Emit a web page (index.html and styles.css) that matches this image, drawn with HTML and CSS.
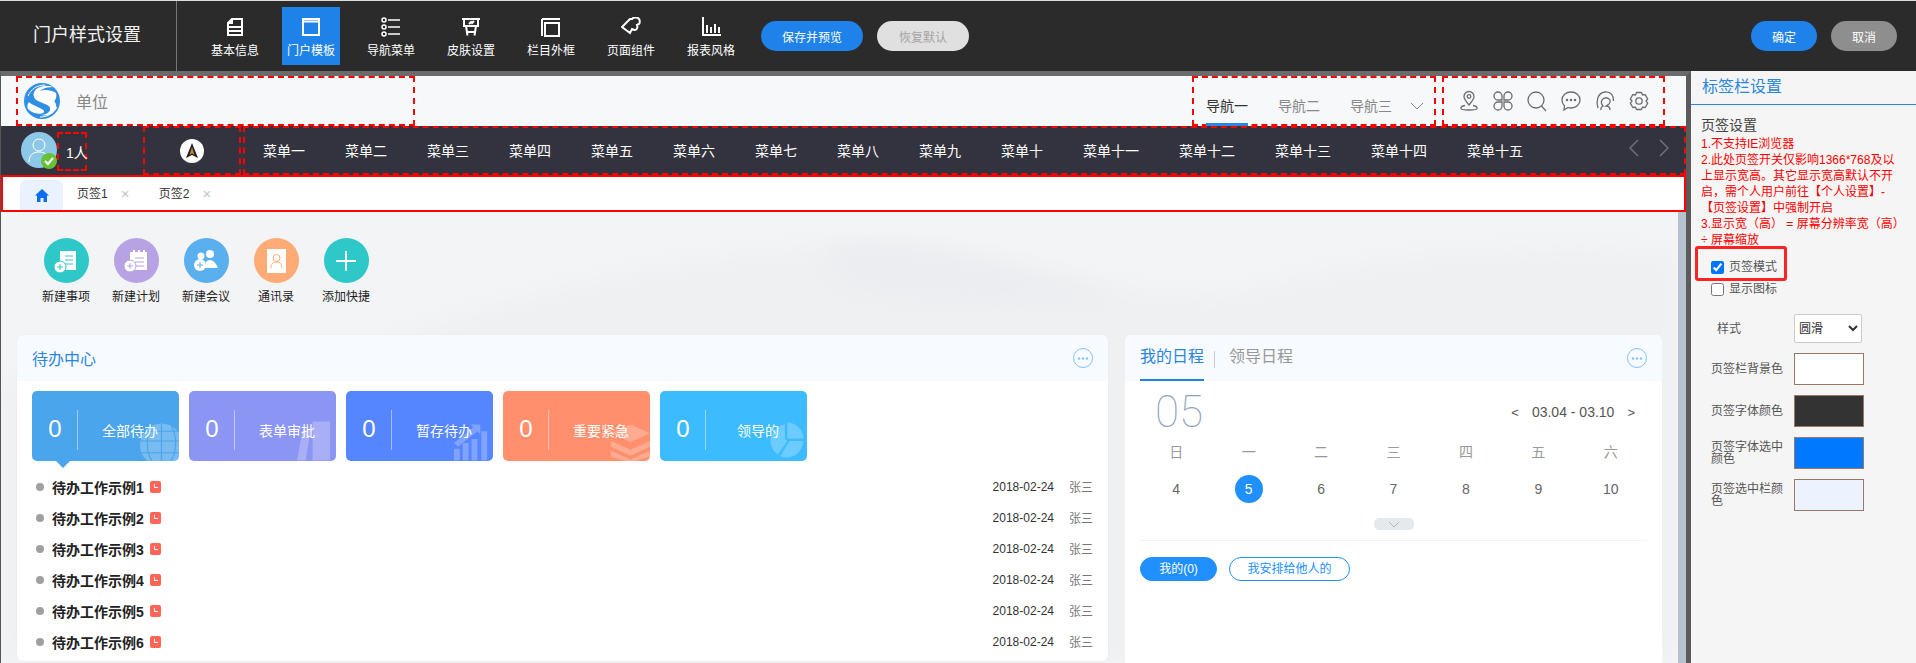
FILE: index.html
```html
<!DOCTYPE html>
<html lang="zh-CN">
<head>
<meta charset="utf-8">
<title>门户样式设置</title>
<link rel="stylesheet" href="styles.css">
</head>
<body>
<div class="app">
  <header class="toolbar">
    <div class="brand">门户样式设置</div>
    <nav class="tools">
      <a class="tool tool-first">
        <svg viewBox="0 0 20 20" class="ti"><path d="M7 2h10v16H3V6z M7 2v4H3 M3 10h14 M3 14h14" /></svg>基本信息</a>
      <a class="tool on">
        <svg viewBox="0 0 20 20" class="ti"><path d="M2 2h16v16H2z M2 4.500h16" /></svg>门户模板</a>
      <a class="tool">
        <svg viewBox="0 0 20 20" class="ti ti-thin"><circle cx="3" cy="3" r="2"/><circle cx="3" cy="10" r="2"/><circle cx="3" cy="17" r="2"/><path d="M7 3h12 M7 10h12 M7 17h12"/></svg>导航菜单</a>
      <a class="tool">
        <svg viewBox="0 0 20 20" class="ti"><path d="M1 2h18 M3 2v7h14V2 M5 9l1.500 9.500 M15 9l-1.500 9.500 M6.500 15h7 M8 7l2-2 1 1 2-2"/></svg>皮肤设置</a>
      <a class="tool">
        <svg viewBox="0 0 20 20" class="ti"><path d="M1 2h18 M1 2v17 M4 6h14v13H4z"/></svg>栏目外框</a>
      <a class="tool">
        <svg viewBox="0 0 20 20" class="ti"><path d="M1 10l8-8h2c1-2 6-2 7 0 1 1 1 4 0 5l-2 1c1 2 0 5-2 5-1 0-2-.5-3-1l-2 4z"/></svg>页面组件</a>
      <a class="tool">
        <svg viewBox="0 0 20 20" class="ti"><path d="M2 0v18h18 M6 8v8 M10 10v6 M14 7v9 M18 10v6"/></svg>报表风格</a>
    </nav>
    <button class="pill pill-save">保存并预览</button>
    <button class="pill pill-reset">恢复默认</button>
    <button class="pill pill-ok">确定</button>
    <button class="pill pill-cancel">取消</button>
  </header>

  <div class="workspace">
    <section class="preview">
      <div class="topnav">
        <div class="dash logo-box">
          <svg class="logo" viewBox="0 0 38 38">
            <circle cx="19" cy="19" r="18" fill="#2f8fe4"/>
            <path d="M30 5C20 1 8 7 11 15c2 6 15 6 16 11 1 4-4 7-9 7 8 2 17-3 15-11-2-6-15-7-16-11-1-3 5-6 13-6z" fill="#fff"/>
            <path d="M33 11C25 6 14 8 16 12c2 3 11 5 15 8 2-3 3-6 2-9zM5 27c6 6 17 6 16 2-1-3-11-5-15-9-2 3-2 5-1 7z" fill="#fff"/>
            <path d="M5 14C8 7 14 3 22 3M34 25c-3 6-9 10-17 10" fill="none" stroke="#fff"/>
          </svg>
          <span class="unit">单位</span>
        </div>
        <div class="dash nav-box">
          <a class="nav-item active">导航一</a>
          <a class="nav-item">导航二</a>
          <a class="nav-item">导航三</a>
          <svg class="nav-more" viewBox="0 0 14 8"><path d="M1 1l6 6 6-6"/></svg>
        </div>
        <div class="dash icon-box">
          <svg viewBox="0 0 22 22" class="oi"><path d="M11 15c-3-3.500-5-6-5-8.500a5 5 0 0 1 10 0c0 2.500-2 5-5 8.500z"/><circle cx="11" cy="6.500" r="1.800"/><path d="M7 15.500c-3 .5-4.500 1.500-4 3 0 1 1.500 1.500 8 1.500s8-.5 8-1.500c.5-1.500-1-2.500-4-3"/></svg>
          <svg viewBox="0 0 22 22" class="oi"><path d="M10 10H6a4 4 0 1 1 4-4z M12 10V6a4 4 0 1 1 4 4z M10 12v4a4 4 0 1 1-4-4z M12 12h4a4 4 0 1 1-4 4z"/></svg>
          <svg viewBox="0 0 22 22" class="oi"><circle cx="10" cy="10" r="8"/><path d="M15.500 16l4.500 5"/></svg>
          <svg viewBox="0 0 22 22" class="oi"><path d="M11 2c5 0 9 3.500 9 8s-4 8-9 8c-1 0-2 0-3-.5L4 20l.5-4C3 14.500 2 12.500 2 10c0-4.500 4-8 9-8z"/><circle cx="7" cy="10" r=".6"/><circle cx="11" cy="10" r=".6"/><circle cx="15" cy="10" r=".6"/></svg>
          <svg viewBox="0 0 22 22" class="oi"><path d="M4 18C2 12 3 3 11 2c6-.5 9 4 8.500 9 M7 20c-.5-2 0-3 2-4-2-2-2-4-1-6 2-3 6-3 8 0 .5 1.500 0 3-1 4l-3 2c2 0 4 1 4 4"/></svg>
          <svg viewBox="0 0 22 22" class="oi oi-round"><path d="M8.500 2.500h5l1 2.500 2.700-.4 2.500 4.400-1.700 2 1.700 2.200-2.500 4.300-2.700-.4-1 2.400h-5l-1-2.400-2.700.4-2.500-4.300 1.700-2.200-1.700-2 2.500-4.400 2.700.4z"/><circle cx="11" cy="11" r="3.200"/></svg>
        </div>
      </div>

      <div class="menubar">
        <div class="user">
          <div class="avatar">
            <svg viewBox="0 0 36 36" class="avatar-face"><circle cx="18" cy="13" r="6"/><path d="M8 30c0-7 4-10 10-10s10 3 10 10"/></svg>
            <svg viewBox="0 0 16 16" class="avatar-ok"><circle cx="8" cy="8" r="8" fill="#67c23a"/><path d="M4 8l3 3 5-6" fill="none" stroke="#fff" stroke-width="2"/></svg>
          </div>
          <div class="dash count">1人</div>
        </div>
        <div class="dash compass-box">
          <svg class="compass" viewBox="0 0 24 24"><circle cx="12" cy="12" r="12" fill="#fff"/><path d="M12 4l6 15-6-3-6 3z" fill="#1d2027"/><path d="M12 8l2.500 8-2.500-1.500-2.500 1.500z" fill="#b9872f"/></svg>
        </div>
        <div class="dash menu-box">
          <a class="menu-item">菜单一</a><a class="menu-item">菜单二</a><a class="menu-item">菜单三</a><a class="menu-item">菜单四</a><a class="menu-item">菜单五</a><a class="menu-item">菜单六</a><a class="menu-item">菜单七</a><a class="menu-item">菜单八</a><a class="menu-item">菜单九</a><a class="menu-item">菜单十</a><a class="menu-item">菜单十一</a><a class="menu-item">菜单十二</a><a class="menu-item">菜单十三</a><a class="menu-item">菜单十四</a><a class="menu-item">菜单十五</a>
          <span class="menu-arrows">
            <svg viewBox="0 0 10 18"><path d="M9 1L1 9l8 8"/></svg>
            <svg viewBox="0 0 10 18"><path d="M1 1l8 8-8 8"/></svg>
          </span>
        </div>
      </div>

      <div class="tabbar">
        <a class="tab-home"><svg viewBox="0 0 14 13"><path d="M7 0L0 6.500h2V13h3.500V9h3v4H12V6.500h2z"/></svg></a>
        <a class="tab">页签1<i class="tab-x">×</i></a>
        <a class="tab">页签2<i class="tab-x">×</i></a>
      </div>

      <div class="stage">
        <div class="canvas">
          <svg class="scenery" viewBox="0 0 1678 452" preserveAspectRatio="none">
            <defs><filter id="soft"><feGaussianBlur stdDeviation="12"/></filter></defs>
            <path d="M380 130C560 70 700 40 880 30c140 20 220 50 340 55 120-30 230-60 458-45V452H0V170c130 0 260-10 380-40z" fill="#eef0f2" filter="url(#soft)"/>
            <path d="M860 30c90 5 170 30 260 55-90 12-170 8-240-2-60-12-80-45-20-53z" fill="#ebedf0" filter="url(#soft)"/>
          </svg>
          <div class="shortcuts">
            <a class="shortcut"><span class="disc teal"><svg viewBox="0 0 28 28"><path d="M8 4h16v19H8z" fill="#fff"/><path d="M13 9h8M13 13h8M13 17h8" stroke="#2ec8c9"/><circle cx="8" cy="20" r="6" fill="#fff" stroke="#2ec8c9"/><path d="M5 20h6M8 17v6" stroke="#2ec8c9"/></svg></span>新建事项</a>
            <a class="shortcut"><span class="disc violet"><svg viewBox="0 0 28 28"><path d="M8 5h17v18H8z" fill="#fff"/><path d="M12 3v4M17 3v4M22 3v4" stroke="#fff" stroke-width="2"/><path d="M13 11h9M13 15h9M13 19h9" stroke="#b7a2e3"/><circle cx="8" cy="19" r="6" fill="#fff" stroke="#b7a2e3"/><path d="M5 19h6M8 16v6" stroke="#b7a2e3"/></svg></span>新建计划</a>
            <a class="shortcut"><span class="disc sky"><svg viewBox="0 0 28 28"><circle cx="9" cy="9" r="3.500" fill="#fff"/><circle cx="18" cy="7" r="4" fill="#fff"/><path d="M13 21c0-5 1-8 5-8s6 4 8 8z" fill="#fff"/><circle cx="8" cy="18" r="6" fill="#fff"/><path d="M5 18h6M8 15v6" stroke="#5aafee"/></svg></span>新建会议</a>
            <a class="shortcut"><span class="disc peach"><svg viewBox="0 0 28 28"><path d="M5 2h19v24H5z" fill="#fff"/><circle cx="14.500" cy="11" r="3.500" fill="none" stroke="#ffab76"/><path d="M9 21c0-4 2-6 5.500-6s5.500 2 5.500 6" fill="none" stroke="#ffab76"/></svg></span>通讯录</a>
            <a class="shortcut"><span class="disc teal"><svg viewBox="0 0 28 28"><path d="M14 4v20M4 14h20" stroke="#fff" stroke-width="2"/></svg></span>添加快捷</a>
          </div>

          <div class="cards">
            <article class="card card-todo">
              <header class="card-head">
                <h2 class="card-title">待办中心</h2>
                <svg class="dots" viewBox="0 0 20 20"><circle cx="10" cy="10" r="9.500"/><circle class="dot" cx="6" cy="10.500" r="1.200"/><circle class="dot" cx="10" cy="10.500" r="1.200"/><circle class="dot" cx="14" cy="10.500" r="1.200"/></svg>
              </header>
              <div class="stats">
                <div class="stat s-blue current"><b class="stat-num">0</b><span class="stat-label">全部待办</span>
                  <svg class="stat-deco" viewBox="0 0 42 40"><circle cx="24" cy="24" r="22"/><path d="M2 20h42M6 10h36M4 32h38M24 2v40M14 4c-6 10-6 26 0 36M34 4c6 10 6 26 0 36" class="cut"/></svg></div>
                <div class="stat s-violet"><b class="stat-num">0</b><span class="stat-label">表单审批</span>
                  <svg class="stat-deco" viewBox="0 0 42 40"><path d="M2 40L8 8h8l-5 32zM18 0h18v40H18z"/></svg></div>
                <div class="stat s-indigo"><b class="stat-num">0</b><span class="stat-label">暂存待办</span>
                  <svg class="stat-deco" viewBox="0 0 42 40"><path d="M2 28h6v12H2zM11 22h6v18h-6zM20 18h6v22h-6zM30 10h6v30h-6zM2 22L22 6l-3-3h10v10l-3-3L6 26z"/></svg></div>
                <div class="stat s-coral"><b class="stat-num">0</b><span class="stat-label">重要紧急</span>
                  <svg class="stat-deco" viewBox="0 0 42 40"><path d="M2 12l20-9 20 9-20 9zM2 20l20 9 20-9v6l-20 9-20-9zM2 30l20 9 20-9v6l-20 6-20-6z"/></svg></div>
                <div class="stat s-cyan"><b class="stat-num">0</b><span class="stat-label">领导的</span>
                  <svg class="stat-deco" viewBox="0 0 42 50"><path d="M22 2v20h20A20 20 0 0 0 22 2zM19 4a21 21 0 0 0-9 38l12-17-3-3zM13 44a21 21 0 0 0 29-19H25z"/></svg></div>
              </div>
              <ul class="todos">
                <li class="todo"><span class="bullet"></span><span class="todo-name">待办工作示例1</span><span class="tag"></span><time class="todo-date">2018-02-24</time><span class="todo-user">张三</span></li>
                <li class="todo"><span class="bullet"></span><span class="todo-name">待办工作示例2</span><span class="tag"></span><time class="todo-date">2018-02-24</time><span class="todo-user">张三</span></li>
                <li class="todo"><span class="bullet"></span><span class="todo-name">待办工作示例3</span><span class="tag"></span><time class="todo-date">2018-02-24</time><span class="todo-user">张三</span></li>
                <li class="todo"><span class="bullet"></span><span class="todo-name">待办工作示例4</span><span class="tag"></span><time class="todo-date">2018-02-24</time><span class="todo-user">张三</span></li>
                <li class="todo"><span class="bullet"></span><span class="todo-name">待办工作示例5</span><span class="tag"></span><time class="todo-date">2018-02-24</time><span class="todo-user">张三</span></li>
                <li class="todo"><span class="bullet"></span><span class="todo-name">待办工作示例6</span><span class="tag"></span><time class="todo-date">2018-02-24</time><span class="todo-user">张三</span></li>
              </ul>
            </article>

            <article class="card card-cal">
              <header class="card-head cal-head">
                <a class="cal-tab on">我的日程</a>
                <span class="cal-sep"></span>
                <a class="cal-tab">领导日程</a>
                <svg class="dots" viewBox="0 0 20 20"><circle cx="10" cy="10" r="9.500"/><circle class="dot" cx="6" cy="10.500" r="1.200"/><circle class="dot" cx="10" cy="10.500" r="1.200"/><circle class="dot" cx="14" cy="10.500" r="1.200"/></svg>
              </header>
              <div class="cal-body">
                <div class="cal-top">
                  <span class="cal-day">05</span>
                  <span class="cal-range"><i>&lt;</i>03.04 - 03.10<i>&gt;</i></span>
                </div>
                <div class="week">
                  <span class="wd">日</span><span class="wd">一</span><span class="wd">二</span><span class="wd">三</span><span class="wd">四</span><span class="wd">五</span><span class="wd">六</span>
                  <span class="dn">4</span><span class="dn"><b class="today">5</b></span><span class="dn">6</span><span class="dn">7</span><span class="dn">8</span><span class="dn">9</span><span class="dn">10</span>
                </div>
                <div class="cal-more"><svg viewBox="0 0 12 7"><path d="M1 1l5 5 5-5"/></svg></div>
                <div class="cal-rule"></div>
                <div class="cal-btns">
                  <a class="cal-btn solid">我的(0)</a>
                  <a class="cal-btn line">我安排给他人的</a>
                </div>
              </div>
            </article>
          </div>
        </div>
        <div class="scroll"></div>
      </div>
    </section>

    <aside class="panel">
      <h2 class="panel-title">标签栏设置</h2>
      <div class="panel-body">
        <h3 class="panel-sub">页签设置</h3>
        <div class="notes">
          <p class="note">1.不支持IE浏览器</p>
          <p class="note">2.此处页签开关仅影响1366*768及以</p>
          <p class="note">上显示宽高。其它显示宽高默认不开</p>
          <p class="note">启，需个人用户前往【个人设置】-</p>
          <p class="note">【页签设置】中强制开启</p>
          <p class="note">3.显示宽（高）&nbsp;= 屏幕分辨率宽（高）</p>
          <p class="note">÷ 屏幕缩放</p>
        </div>
        <div class="mark">
          <label class="check"><input type="checkbox" checked>页签模式</label>
        </div>
        <label class="check check-2"><input type="checkbox">显示图标</label>
        <div class="form">
          <span class="form-label form-label-short">样式</span>
          <select class="form-select"><option>圆滑</option></select>
          <span class="form-label">页签栏背景色</span>
          <span class="swatch c-white"></span>
          <span class="form-label">页签字体颜色</span>
          <span class="swatch c-dark"></span>
          <span class="form-label">页签字体选中颜色</span>
          <span class="swatch c-blue"></span>
          <span class="form-label">页签选中栏颜色</span>
          <span class="swatch c-pale"></span>
        </div>
      </div>
    </aside>
  </div>
</div>
</body>
</html>
```
FILE: styles.css
```css
* { box-sizing: border-box; }
html, body { margin: 0; padding: 0; height: 100%; overflow: hidden; }
body { font-family: "Liberation Sans", "Noto Sans CJK SC", sans-serif; font-size: 12px; color: #333; background: #ddd; }
a { color: inherit; text-decoration: none; }
h2, h3, p, ul { margin: 0; padding: 0; font-weight: 400; list-style: none; }
i { font-style: normal; }

.app { height: 663px; padding-top: 1px; display: flex; flex-direction: column; }

.toolbar { height: 70px; flex: none; background: #2b2b2b; display: flex; align-items: center; color: #fff; }
.brand { width: 177px; height: 70px; line-height: 68px; padding-left: 33px; font-size: 18px; border-right: 1px solid #777; color: #f2f2f2; }
.tools { display: flex; gap: 22px; padding-left: 29px; height: 58px; margin-right: 21px; }
.tool { width: 58px; display: flex; flex-direction: column; align-items: center; padding-top: 10px; gap: 6px; line-height: 16px; white-space: nowrap; }
.tool-first { margin-right: -4px; }
.tool.on { background: #1e82e8; }
.ti { width: 20px; height: 20px; fill: none; stroke: #fff; stroke-width: 2; }
.ti-thin { stroke-width: 1.500; }
.pill { height: 30px; border: 0; border-radius: 15px; font: inherit; color: #fff; background: #1e82ea; padding: 0; }
.pill-save { width: 102px; margin-right: 14px; }
.pill-reset { width: 92px; background: #e0e0e0; color: #a5a5a5; margin-right: auto; }
.pill-ok { width: 66px; margin-right: 14px; }
.pill-cancel { width: 66px; background: #8e8e8e; margin-right: 19px; }

.workspace { flex: 1; display: flex; min-height: 0; }

.preview { width: 1691px; flex: none; display: flex; flex-direction: column; border-top: 5px solid #6b6b6b; border-right: 5px solid #5a5a5a; border-left: 1px solid #555; background: #f3f4f6; }

.dash { border: 2px dashed #f00; }

.topnav { height: 50px; flex: none; display: flex; padding-left: 15px; background: #f7f8f9; }
.logo-box { width: 399px; display: flex; align-items: center; padding-left: 5px; }
.logo { width: 38px; height: 38px; }
.unit { font-size: 16px; color: #888; margin-left: 15px; }
.nav-box { width: 244px; margin-left: auto; display: flex; padding-left: 12px; gap: 30px; font-size: 14px; color: #888; }
.nav-item { position: relative; padding-top: 18px; line-height: 20px; }
.nav-item.active { color: #333; }
.nav-item.active::after { content: ""; position: absolute; left: 0; right: 0; bottom: -2px; height: 3px; background: #2b86e0; }
.nav-more { width: 14px; height: 8px; margin: 24px 0 0 -12px; fill: none; stroke: #888; }
.icon-box { width: 223px; margin-left: 6px; margin-right: 21px; display: flex; align-items: center; gap: 12px; padding-left: 14px; }
.oi { width: 22px; height: 22px; fill: none; stroke: #6d6d6d; stroke-width: 1.300; }
.oi-round { stroke-linejoin: round; }

.menubar { height: 49px; flex: none; display: flex; background: #32333e; color: #fff; font-size: 14px; }
.user { width: 142px; padding: 6px 0 0 20px; display: flex; }
.avatar { position: relative; width: 36px; height: 36px; border-radius: 50%; background: #8ec8e8; }
.avatar-face { width: 36px; height: 36px; fill: none; stroke: #fff; stroke-width: 1; }
.avatar-ok { position: absolute; width: 16px; height: 16px; right: 0; bottom: -1px; }
.count { width: 30px; height: 39px; line-height: 37px; padding: 1px 0 0 7px; white-space: nowrap; }
.compass-box { width: 98px; margin-right: 2px; display: flex; align-items: center; justify-content: center; }
.compass { width: 24px; height: 24px; }
.menu-box { flex: 1; display: flex; align-items: center; padding: 0 0 2px 18px; gap: 40px; white-space: nowrap; }
.menu-arrows { margin-left: auto; display: flex; gap: 20px; margin-right: 15px; margin-top: -4px; }
.menu-arrows svg { width: 10px; height: 18px; fill: none; stroke: #6f7078; stroke-width: 1.500; }

.tabbar { height: 37px; flex: none; background: #fff; border: 2px solid #f00; display: flex; align-items: center; padding-left: 17px; }
.tab-home { width: 43px; height: 30px; margin-top: 3px; margin-right: 14px; background: #eaf2ff; border-radius: 6px 6px 0 0; display: flex; align-items: center; justify-content: center; }
.tab-home svg { width: 14px; height: 13px; fill: #0b6ff0; }
.tab { display: flex; align-items: center; color: #333; margin-right: 30px; line-height: 16px; }
.tab-x { width: 8px; margin-left: 13px; color: #c4c4c4; font-size: 15px; line-height: 16px; text-align: center; }

.stage { flex: 1; min-height: 0; display: flex; }
.canvas { flex: 1; position: relative; overflow: hidden; padding: 26px 0 0 16px; }
.scroll { width: 8px; flex: none; background: #b8c1d0; }
.scenery { position: absolute; inset: 0; width: 100%; height: 100%; }

.shortcuts { position: relative; display: flex; margin-left: 14px; height: 97px; }
.shortcut { width: 70px; display: flex; flex-direction: column; align-items: center; color: #222; line-height: 16px; white-space: nowrap; gap: 6px; }
.disc { width: 45px; height: 45px; border-radius: 50%; display: flex; align-items: center; justify-content: center; }
.disc svg { width: 28px; height: 28px; }
.teal { background: #2ec8c9; }
.violet { background: #b7a2e3; }
.sky { background: #5aafee; }
.peach { background: #ffab76; }

.cards { position: relative; display: flex; gap: 17px; align-items: flex-start; }
.card { background: #fff; border-radius: 6px; overflow: visible; }
.card-todo { width: 1091px; height: 326px; box-shadow: 0 0 1px #d5d8dc; }
.card-cal { width: 537px; height: 340px; }
.card-head { height: 46px; background: #f7faff; border-radius: 6px 6px 0 0; display: flex; align-items: center; padding: 0 15px; position: relative; }
.card-title { font-size: 16px; color: #2b86e0; margin-top: -1px; }
.dots { margin-left: auto; width: 20px; height: 20px; fill: none; stroke: #82c4f5; flex: none; }
.dots .dot { fill: #82c4f5; stroke: none; }

.stats { display: flex; gap: 10px; padding: 10px 0 0 15px; }
.stat { position: relative; width: 147px; height: 70px; border-radius: 5px; color: #fff; display: flex; align-items: center; padding-top: 7px; }
.stat-num { width: 46px; height: 40px; line-height: 38px; padding-left: 1px; text-align: center; font-size: 24px; font-weight: 400; border-right: 1px solid rgba(255,255,255,.45); flex: none; }
.stat-label { width: 56px; text-align: center; font-size: 14px; margin-left: 24px; position: relative; z-index: 1; }
.stat-deco { position: absolute; right: 0; bottom: 0; width: 41px; height: 40px; fill: rgba(255,255,255,.25); }
.stat-deco .cut { fill: none; stroke: #4aa5ec; stroke-width: 1.200; }
.s-blue { background: #4aa5ec; }
.s-violet { background: #8b95f3; }
.s-indigo { background: #5585ff; }
.s-coral { background: #ff8f6d; }
.s-cyan { background: #3dbbff; }
.current::after { content: ""; position: absolute; left: 24px; top: 100%; border: 7px solid transparent; border-top-color: #4aa5ec; border-bottom: 0; }

.todos { padding: 10px 15px 0 19px; }
.todo { height: 31px; display: flex; align-items: center; }
.bullet { width: 8px; height: 8px; border-radius: 50%; background: #a0a0a0; margin-right: 8px; }
.todo-name { font-size: 14px; font-weight: 700; color: #222; }
.tag { width: 11px; height: 12px; margin-left: 6px; border-radius: 2px; background: #ff6557; position: relative; }
.tag::after { content: ""; position: absolute; left: 4px; top: 3px; width: 3px; height: 3px; border-left: 1px solid #fff; border-bottom: 1px solid #fff; }
.todo-date { margin-left: auto; color: #333; }
.todo-user { margin-left: 15px; color: #777; }

.cal-head { align-items: stretch; }
.cal-tab { font-size: 16px; line-height: 44px; color: #999; }
.cal-tab.on { color: #2b86e0; border-bottom: 2px solid #1e82ea; }
.cal-sep { width: 1px; height: 17px; background: #ccc; margin: 16px 14px 0 10px; }
.cal-head .dots { align-self: center; }
.cal-body { padding: 8px 15px 0; }
.cal-top { display: flex; justify-content: space-between; align-items: center; height: 46px; }
.cal-day { font-family: Roboto, "Liberation Sans", sans-serif; font-weight: 100; font-size: 44px; line-height: 46px; color: #8ea3bd; margin-left: 15px; }
.cal-range { display: flex; align-items: center; font-size: 14px; color: #555; margin-right: 12px; }
.cal-range i { font-size: 13px; margin: 0 13px; }
.cal-range i:last-child { margin-right: 0; }
.week { display: grid; grid-template-columns: repeat(7, 1fr); grid-template-rows: 32px 44px; text-align: center; font-size: 14px; align-items: center; justify-items: center; }
.wd { color: #999; }
.dn { color: #666; }
.today { display: block; width: 28px; height: 28px; line-height: 28px; border-radius: 50%; background: #2090ff; color: #fff; font-weight: 400; }
.cal-more { width: 40px; height: 12px; margin: 7px auto 0; background: #e4e9ee; border-radius: 5px; display: flex; align-items: center; justify-content: center; }
.cal-more svg { width: 12px; height: 7px; fill: none; stroke: #aeb6bf; }
.cal-rule { height: 1px; background: #f0f2f4; margin-top: 10px; }
.cal-btns { display: flex; gap: 12px; margin-top: 16px; }
.cal-btn { height: 24px; line-height: 22px; border-radius: 12px; text-align: center; border: 1px solid #2090ff; }
.cal-btn.solid { width: 77px; background: #2090ff; color: #fff; }
.cal-btn.line { width: 121px; color: #2090ff; }

.panel { flex: 1; background: #f5f5f5; min-width: 0; }
.panel-title { height: 34px; line-height: 32px; font-size: 16px; color: #2b86e0; padding-left: 11px; border-bottom: 1px solid #2b86e0; }
.panel-body { padding: 12px 0 0 10px; }
.panel-sub { font-size: 14px; line-height: 16px; color: #444; }
.notes { color: #f00; line-height: 16px; white-space: nowrap; padding-top: 3px; }
.mark { width: 92px; height: 35px; margin: -2px 0 0 -6px; border: 3px solid #f22; border-radius: 3px; padding: 12px 0 0 13px; }
.check { display: flex; align-items: center; gap: 5px; color: #555; line-height: 13px; white-space: nowrap; }
.check input { margin: 0; width: 13px; height: 13px; }
.check-2 { margin: 2px 0 0 10px; }
.form { display: grid; grid-template-columns: 72px 70px; column-gap: 11px; row-gap: 10px; padding: 18px 0 0 10px; align-items: center; }
.form-label { color: #555; line-height: 12px; }
.form-label-short { padding-left: 6px; }
.form-select { width: 68px; height: 29px; font: inherit; background: #fff; border: 1px solid #ccc; border-radius: 2px; color: #333; }
.swatch { height: 32px; border: 1px solid #9a7868; }
.c-white { background: #fff; }
.c-dark { background: #333; }
.c-blue { background: #0078ff; }
.c-pale { background: #edf2ff; }
```
